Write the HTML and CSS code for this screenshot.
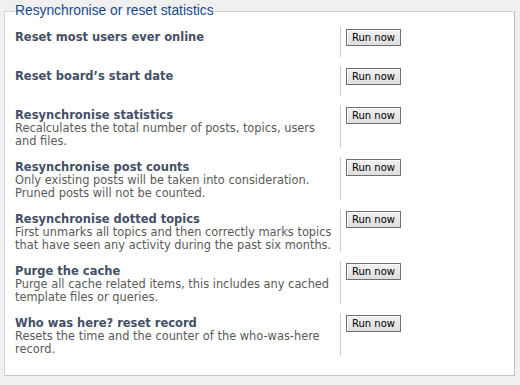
FILE: index.html
```html
<!DOCTYPE html>
<html lang="en">
<head>
    <meta charset="UTF-8">
    <title>Resynchronise or reset statistics</title>
    <link rel="stylesheet" href="styles.css">
</head>
<body>

    <fieldset class="stats">
        <legend>Resynchronise or reset statistics</legend>

        <dl>
            <dt><label>Reset most users ever online</label><span class="explain">&nbsp;</span></dt>
            <dd><button type="button">Run now</button></dd>
        </dl>
        <dl>
            <dt><label>Reset board’s start date</label><span class="explain">&nbsp;</span></dt>
            <dd><button type="button">Run now</button></dd>
        </dl>
        <dl>
            <dt><label>Resynchronise statistics</label><span class="explain">Recalculates the total number of posts, topics, users and files.</span></dt>
            <dd><button type="button">Run now</button></dd>
        </dl>
        <dl>
            <dt><label>Resynchronise post counts</label><span class="explain">Only existing posts will be taken into consideration. Pruned posts will not be counted.</span></dt>
            <dd><button type="button">Run now</button></dd>
        </dl>
        <dl>
            <dt><label>Resynchronise dotted topics</label><span class="explain">First unmarks all topics and then correctly marks topics that have seen any activity during the past six months.</span></dt>
            <dd><button type="button">Run now</button></dd>
        </dl>
        <dl>
            <dt><label>Purge the cache</label><span class="explain">Purge all cache related items, this includes any cached template files or queries.</span></dt>
            <dd><button type="button">Run now</button></dd>
        </dl>
        <dl>
            <dt><label>Who was here? reset record</label><span class="explain">Resets the time and the counter of the who-was-here record.</span></dt>
            <dd><button type="button">Run now</button></dd>
        </dl>
    </fieldset>

</body>
</html>
```

FILE: styles.css
```css
* {
    box-sizing: border-box;
}

body {
    margin: 0;
    padding: 3px 5px 0 4px;
    background-color: #f0f0f0;
    font-family: "DejaVu Sans", Verdana, sans-serif;
    font-size: 11px;
}

.stats {
    margin: 0;
    padding: 8px 0 10px 10px;
    background-color: #ffffff;
    border: 1px solid #d3d3d3;
    border-right-color: #bdbdbd;
    border-bottom-color: #c6c6c6;
}

.stats legend {
    padding: 0;
    margin-left: 0;
    font-family: "Liberation Sans", Arial, sans-serif;
    font-size: 13.8px;
    line-height: 16px;
    color: #164b8c;
}

dl {
    display: flex;
    margin: 0 0 9px 0;
}

dt {
    width: 326px;
    padding: 4px 0 0 0;
    border-right: 1px solid #cccccc;
}

dt label {
    display: block;
    font-weight: bold;
    font-size: 11.5px;
    line-height: 13px;
    color: #425067;
}

.explain {
    display: block;
    font-size: 11.4px;
    line-height: 13px;
    color: #5a5a5a;
    padding-right: 6px;
}

dd {
    margin: 0;
    padding: 2px 0 0 5px;
}

dd button {
    width: 55px;
    height: 17px;
    padding: 0;
    font-family: "DejaVu Sans", Verdana, sans-serif;
    font-size: 10px;
    color: #000000;
    background: linear-gradient(#f2f2f2, #dedede);
    border: 1px solid #6e6e6e;
    border-radius: 0;
    box-shadow: inset 1px 1px 0 #ffffff;
}
```
